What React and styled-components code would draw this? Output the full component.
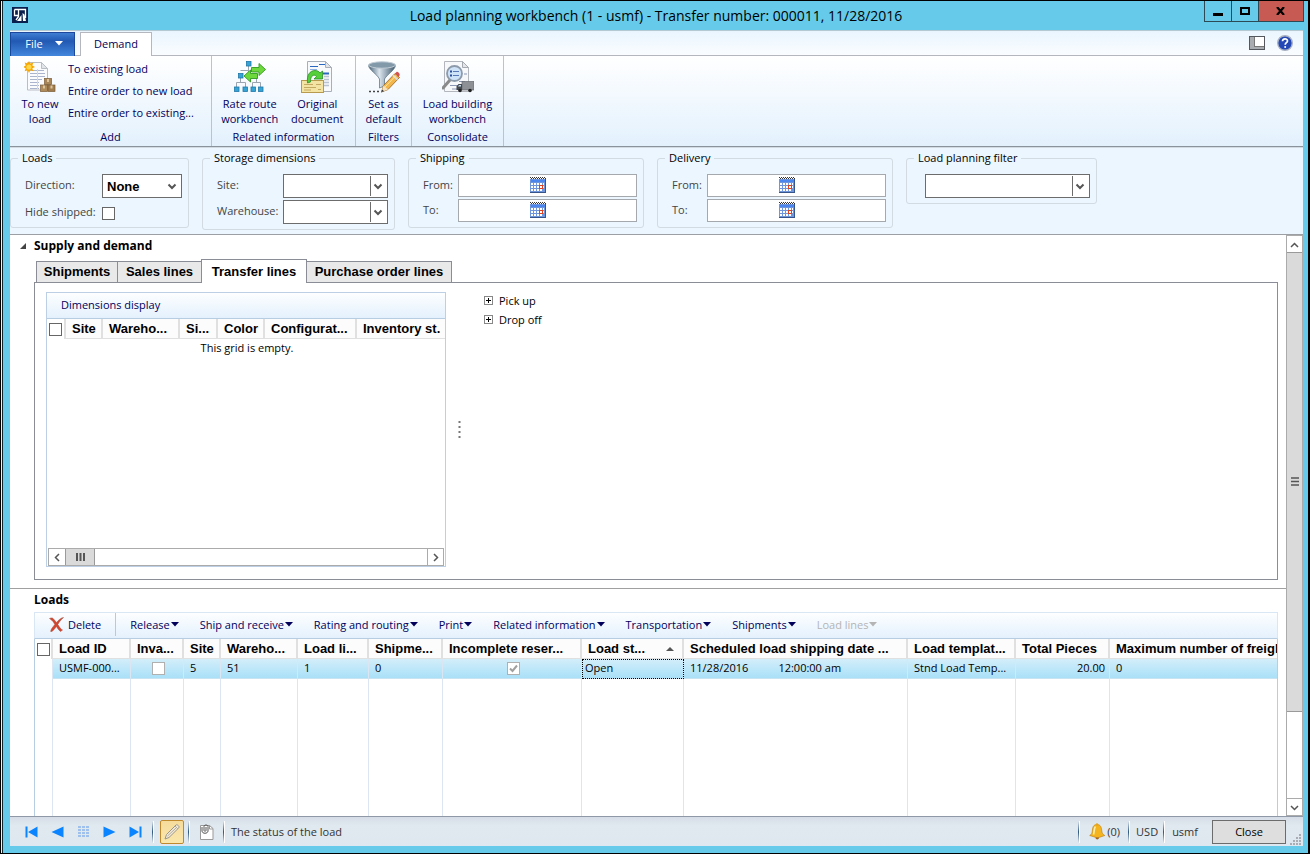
import React from 'react';
import styled, { createGlobalStyle, css } from 'styled-components';

const GlobalStyle = createGlobalStyle`
  * {
    box-sizing: border-box;
  }
  body {
    margin: 0;
    font-family: 'Open Sans', 'Noto Sans', sans-serif;
    font-size: 11px;
    line-height: 16px;
    color: #1e1e1e;
  }
  button, input, select {
    font: inherit;
    color: inherit;
    margin: 0;
    padding: 0;
    border: 0;
    background: none;
    border-radius: 0;
  }
`

/* window frame */

const Window = styled.div`
  display: flex;
  flex-direction: column;
  height: 100vh;
  min-height: 640px;
  border: 1px solid #000;
  border-right: 2px solid #000;
  background: #66cbea;
  box-shadow: inset 1px 0 #e8f4f8, inset 2px 0 #10242c;
`

const TitleBar = styled.header`
  display: grid;
  grid-template-columns: 96px 1fr 100px;
  height: 29px;
  padding: 0 4px 0 11px;
`

const Title = styled.h1`
  margin: 0;
  padding-top: 4px;
  font-size: 14px;
  line-height: 22px;
  font-weight: 400;
  text-align: center;
  color: #000;
`

const AppIcon = styled.svg`
  margin-top: 6px;
`

const WindowButtons = styled.div`
  display: flex;
  height: 21px;
  border: 1px solid #2c4a56;
  border-top: 0;
`

const WindowButton = styled.button`
  display: flex;
  align-items: center;
  justify-content: center;
  flex: ${props => props.$close ? '46 1 0' : '27 1 0'};
  background: ${props => props.$close ? '#c75a52' : 'transparent'};
  border-left: ${props => props.$first ? '0' : '1px solid #2c4a56'};
`

const Content = styled.div`
  flex: 1;
  min-height: 0;
  display: flex;
  flex-direction: column;
  margin: 0 5px 7px 9px;
  background: #fff;
`

/* ribbon */

const TabStrip = styled.nav`
  display: flex;
  align-items: flex-end;
  height: 26px;
  border-top: 1px solid #b5c9d3;
  background: linear-gradient(#e9f5fe, #fbfdff);
  box-shadow: inset 0 -1px #b4b7bd;
`

const FileTab = styled.button`
  display: flex;
  align-items: center;
  justify-content: center;
  gap: 12px;
  width: 65px;
  height: 24px;
  margin-right: 5px;
  padding: 0 0 2px 4px;
  border: 1px solid #1c479c;
  border-bottom: 0;
  background: linear-gradient(#3f7ed2, #2159b3 35%, #4387dc);
  color: #fff;
`

const RibbonTab = styled.button`
  width: 72px;
  height: 24px;
  padding-bottom: 2px;
  border: 1px solid #b4b7bd;
  border-bottom: 0;
  background: #fff;
  color: #00005a;
`

const StripIcons = styled.div`
  display: flex;
  align-items: center;
  gap: 12px;
  height: 25px;
  margin-left: auto;
  padding: 0 10px 2px 0;
`

const Ribbon = styled.div`
  display: flex;
  height: 91px;
  background: linear-gradient(#fff, #e3f1fd);
  border-bottom: 1px solid #8a929c;
`

const RibbonGroup = styled.section`
  display: flex;
  flex-direction: column;
  width: ${props => props.$width}px;
  border-right: 1px solid #bac4d0;
  color: #00005a;
`

const GroupBody = styled.div`
  display: flex;
  flex: 1;
  padding: 5px 4px 0;
  justify-content: ${props => props.$start ? 'flex-start' : 'center'};
`

const GroupLabel = styled.div`
  height: 17px;
  text-align: center;
`

const BigButton = styled.button`
  display: flex;
  flex-direction: column;
  align-items: center;
  gap: 3px;
  width: ${props => props.$width}px;
  line-height: 15px;
  color: #00005a;
  white-space: nowrap;
  svg {
    flex: none;
  }
`

const ButtonStack = styled.div`
  display: flex;
  flex-direction: column;
  padding-left: 2px;
  button {
    height: 22px;
    text-align: left;
    white-space: nowrap;
    padding-bottom: 6px;
  }
`

/* filter pane */

const FilterPane = styled.form`
  display: flex;
  align-items: flex-start;
  gap: 13px;
  height: 88px;
  padding-top: 2px;
  background: #ebf6fe;
  border-top: 1px solid #d3dbe2;
  border-bottom: 1px solid #9c9fa3;
`

const FilterGroup = styled.fieldset`
  display: grid;
  grid-template-columns: ${props => props.$columns};
  row-gap: ${props => props.$gap || 2}px;
  align-items: center;
  width: ${props => props.$width}px;
  min-width: 0;
  margin: 0;
  padding: 8px 6px 5px ${props => props.$indent || 14}px;
  border: 1px solid #d2dae2;
  border-radius: 3px;
  color: #444;
  legend {
    margin-left: ${props => props.$indent ? '-11px' : '-7px'};
    padding: 0 4px;
    color: #000;
  }
  label {
    padding-bottom: 2px;
  }
`

const SelectBox = styled.div`
  display: grid;
  grid-template-columns: 1fr 18px;
  height: 24px;
  border: 1px solid #6c6c6c;
  background: #fff;
  select {
    grid-area: 1 / 1 / 2 / 3;
    min-width: 0;
    appearance: none;
    padding-left: 4px;
    font: bold 13px 'Liberation Sans', Arial, sans-serif;
    color: #000;
  }
  svg {
    grid-area: 1 / 2;
    align-self: center;
    justify-self: stretch;
    pointer-events: none;
  }
`

const DateBox = styled.div`
  display: flex;
  align-items: center;
  height: 23px;
  border: 1px solid #a5a9ae;
  background: #fff;
  input {
    width: 71px;
    height: 21px;
  }
  button {
    display: flex;
    padding-bottom: 2px;
  }
`

const CheckBox = styled.input.attrs({ type: 'checkbox' })`
  appearance: none;
  display: block;
  width: 13px;
  height: 13px;
  border: 1px solid ${props => props.$muted ? '#b0b0b0' : '#666'};
  background: #fff;
  &:checked {
    background: #fff url("data:image/svg+xml,%3Csvg xmlns='http://www.w3.org/2000/svg' viewBox='0 0 11 11'%3E%3Cpath d='M2 5.5L4.5 8L9 2.5' fill='none' stroke='%23a0a0a0' stroke-width='2'/%3E%3C/svg%3E");
  }
`

/* main area */

const Main = styled.main`
  flex: 1;
  min-height: 0;
  display: flex;
`

const Scrolled = styled.div`
  flex: 1;
  min-width: 0;
  display: flex;
  flex-direction: column;
`

const Supply = styled.section`
  padding: 2px 8px 8px 24px;
  border-bottom: 1px solid #a0a0a0;
`

const Heading = styled.h2`
  display: flex;
  align-items: center;
  margin: 0;
  font-size: 12px;
  line-height: 18px;
  color: #000;
  svg {
    flex: none;
    margin-left: -15px;
    margin-right: 7px;
  }
`

const PageTabs = styled.div`
  display: flex;
  align-items: flex-end;
  height: 27px;
  padding-left: 2px;
`

const PageTab = styled.button`
  flex: none;
  width: ${props => props.$width}px;
  height: 21px;
  border: 1px solid #8a8d96;
  border-bottom: 0;
  margin-left: -1px;
  background: #e9e9e9;
  font: bold 13px/20px 'Liberation Sans', Arial, sans-serif;
  color: #000;
  white-space: nowrap;
  &:first-child {
    margin-left: 0;
  }
  ${props => props.$active && css`
    height: 24px;
    line-height: 22px;
    margin-bottom: -1px;
    background: #fff;
  `}
`

const TabPanel = styled.div`
  display: flex;
  height: 298px;
  padding: 9px 11px 12px;
  border: 1px solid #8a8d96;
`

const DimensionGrid = styled.div`
  display: flex;
  flex-direction: column;
  width: 400px;
  border: 1px solid #bccfe4;
`

const Strip = styled.div`
  display: flex;
  align-items: center;
  height: 26px;
  padding-bottom: 2px;
  background: linear-gradient(#fdfeff, #e4f1fd);
  border-bottom: 1px solid #b7cde2;
  color: #00005a;
`

const StripButton = styled.button`
  display: flex;
  align-items: center;
  gap: 1px;
  padding: 0;
  color: ${props => props.disabled ? '#b4b4b4' : '#00005a'};
  white-space: nowrap;
`

const DisplayButton = styled(StripButton)`
  padding-left: 14px;
`

const Grid = styled.table`
  width: 100%;
  table-layout: fixed;
  border-collapse: separate;
  border-spacing: 0;
  th, td {
    padding: 0 4px 0 6px;
    overflow: hidden;
    white-space: nowrap;
    text-align: left;
  }
  th {
    height: 20px;
    border-right: 2px solid #e0e0e0;
    border-bottom: 1px solid #e0e0e0;
    padding-right: 0;
    background: #fcfcfc;
    font: bold 13px/18px 'Liberation Sans', Arial, sans-serif;
    color: #000;
  }
  th:first-child {
    padding-left: 2px;
    background: #fff;
    border-bottom: 0;
  }
  th:last-child {
    border-right: 0;
  }
`

const EmptyCell = styled.td`
  && {
    height: 18px;
    text-align: center;
    color: #000;
  }
`

const HScroll = styled.div`
  display: flex;
  height: 18px;
  margin: auto 1px 0;
  border: 1px solid #ababab;
`

const ScrollButton = styled.button`
  display: flex;
  align-items: center;
  justify-content: center;
  flex: 0 0 16px;
`

const HThumb = styled.div`
  display: flex;
  align-items: center;
  justify-content: center;
  width: 30px;
  border: 1px solid #9a9a9a;
  border-top: 0;
  border-bottom: 0;
  background: #dadada;
  margin-right: auto;
`

const EndScrollButton = styled(ScrollButton)`
  border-left: 1px solid #ababab;
`

const Splitter = styled.div`
  display: flex;
  align-items: center;
  width: 38px;
  padding-left: 12px;
`

const Tree = styled.ul`
  margin: 0;
  padding: 0;
  list-style: none;
  li {
    display: flex;
    align-items: center;
    gap: 6px;
    height: 19px;
    padding-bottom: 2px;
    color: #000;
  }
  button {
    display: flex;
  }
`

const LoadsPane = styled.section`
  flex: 1;
  min-height: 0;
  display: flex;
  flex-direction: column;
  padding: 2px 8px 0 24px;
`

const LoadsStrip = styled(Strip)`
  flex: none;
  gap: 20px;
  height: 27px;
  margin-top: 3px;
  border: 1px solid #d9e6f3;
  border-bottom-color: #b7cde2;
`

const DeleteButton = styled(StripButton)`
  align-self: stretch;
  gap: 4px;
  margin-right: -6px;
  padding-left: 14px;
  padding-right: 14px;
  border-right: 1px solid #bfc8d2;
`

const LoadsGrid = styled.div`
  flex: 1;
  min-height: 0;
  display: grid;
  border-left: 1px solid #b7cde2;
  border-right: 1px solid #b7cde2;
  overflow: hidden;
  td {
    border-right: 1px solid #dbe6f2;
    color: #000;
  }
  td:last-child {
    border-right: 0;
  }
`

const SelectedRow = styled.tr`
  td {
    height: 20px;
    padding-bottom: 1px;
    border-bottom: 1px solid #c8e4f2;
    background: linear-gradient(#d3eefa, #a9e0f8);
  }
  td:first-child {
    background: #fff;
    border-bottom: 0;
  }
`

const CenterCell = styled.td`
  input {
    margin: 0 auto;
  }
`

const FocusCell = styled.td`
  && {
    padding-left: 3px;
    outline: 1px dotted #000;
    outline-offset: -1px;
  }
`

const NumberCell = styled.td`
  && {
    text-align: right;
  }
`

const SortHead = styled.div`
  display: flex;
  align-items: center;
  justify-content: space-between;
  padding-right: 8px;
`

const DateTime = styled.div`
  display: flex;
  gap: 30px;
`

const VScroll = styled.div`
  display: flex;
  flex-direction: column;
  width: 17px;
  border: 1px solid #ababab;
  background: #fff;
`

const VThumb = styled.div`
  flex: 461 1 0;
  display: flex;
  align-items: center;
  justify-content: center;
  border-top: 1px solid #9a9a9a;
  border-bottom: 1px solid #9a9a9a;
  background: #dadada;
`

const VTrack = styled.div`
  flex: 87 1 0;
  border-bottom: 1px solid #ababab;
`

/* status bar */

const StatusBar = styled.footer`
  display: flex;
  align-items: center;
  height: 30px;
  padding-left: 14px;
  border-top: 1px solid #8e98a6;
  background: linear-gradient(#d5dce6, #e1e9f0 30%, #dee7ef);
  color: #333;
`

const RecordButtons = styled.div`
  display: flex;
  gap: 11px;
  margin-right: 9px;
  button {
    display: flex;
  }
`

const Divider = styled.span`
  width: 2px;
  height: 22px;
  margin: 0 6px 0 0;
  background: linear-gradient(90deg, transparent 50%, #fff 50%), linear-gradient(#dfe7ef, #2d587e 50%, #dfe7ef);
`

const EditButton = styled.button`
  display: flex;
  align-items: center;
  justify-content: center;
  width: 24px;
  height: 24px;
  margin-right: 4px;
  border: 1px solid #c08a2c;
  border-radius: 2px;
  background: linear-gradient(#f5dc9c, #fbe7ab);
`

const ClipButton = styled.button`
  display: flex;
  margin: 0 9px 0 4px;
`

const Alerts = styled.button`
  display: flex;
  align-items: center;
  gap: 1px;
  margin: 0 8px 0 3px;
`

const StatusText = styled.span`
  margin-right: ${props => props.$grow ? 'auto' : '5px'};
`

const Company = styled.span`
  margin: 0 14px 0 1px;
`

const CloseButton = styled.button`
  width: 74px;
  height: 24px;
  margin-right: 4px;
  border: 1px solid #6c6c6c;
  background: #dedede;
  color: #000;
`

const Grip = styled.svg`
  margin-right: 1px;
  align-self: flex-end;
`

/* icons */

const Caret = ({ color = '#00005a' }) => (
  <svg width="9" height="5" viewBox="0 0 9 5"><path d="M0 0h8L4 4.500z" fill={color} /></svg>
)

const Chevron = ({ split }) => (
  <svg width="18" height="20" viewBox="0 0 18 20">
    {split && <path d="M1.5 0v20" stroke="#6c6c6c" />}
    <path d="M5.5 8.5L9 12L12.5 8.5" fill="none" stroke="#555" strokeWidth="2" />
  </svg>
)

const arrows = {
  up: 'M1 7L4.5 3.5L8 7',
  down: 'M1 3L4.5 6.5L8 3',
  left: 'M6 1L2.5 4.5L6 8',
  right: 'M3 1L6.5 4.5L3 8',
}

const Arrow = ({ to }) => (
  <svg width="9" height="9" viewBox="0 0 9 9">
    <path d={arrows[to]} fill="none" stroke="#555" strokeWidth="1.5" />
  </svg>
)

const CalendarIcon = () => (
  <svg width="16" height="16" viewBox="0 0 16 16" shapeRendering="crispEdges">
    <path d="M0 .5h16" stroke="#333" strokeDasharray="1 1" />
    <path d="M1 1.500h15" stroke="#333" strokeDasharray="1 1" />
    <rect x="0" y="2" width="16" height="14" fill="#35558c" />
    <rect x="0" y="2" width="15" height="13" fill="#6f96dc" />
    <rect x="1" y="3" width="14" height="2" fill="#4b86ee" />
    <path d="M1 6h2v2h-2zM4 6h2v2h-2zM7 6h2v2h-2zM10 6h2v2h-2zM13 6h1v2h-1zM1 9h2v2h-2zM4 9h2v2h-2zM7 9h2v2h-2zM13 9h1v2h-1zM1 12h2v2h-2zM4 12h2v2h-2zM7 12h2v2h-2zM10 12h2v2h-2z" fill="#fff" />
    <rect x="9.5" y="8.5" width="3" height="3" fill="#fff" stroke="#e0411c" />
  </svg>
)

const Page = () => (
  <>
    <path d="M3.500 1.500h14l6 6v21.500h-20z" fill="#fafbfc" stroke="#b9bdc4" />
    <path d="M17.500 1.500v6h6z" fill="#e1e4e8" stroke="#b9bdc4" />
  </>
)

const NewLoadIcon = () => (
  <svg width="32" height="32" viewBox="0 0 32 32">
    <Page />
    <path d="M6 9.500h14M6 12.500h15M6 15.500h15M6 18.500h12M6 21.500h9M6 24.500h9M6 27.500h9" stroke="#aab4cd" />
    <path d="M13.500 8v20" stroke="#d3d8e3" />
    <path d="M5 0l1.300 2.600 3-1-1 3 2.700 1.400-2.700 1.300 1 3-3-1L5 12 3.700 9.300l-3 1 1-3L-1 6l2.700-1.400-1-3 3 1z" fill="#f7a600" />
    <circle cx="5" cy="6" r="2.600" fill="#ffd84a" />
    <g stroke="#7a5c37" strokeWidth=".7">
      <rect x="20.500" y="17.500" width="7" height="6" fill="#a98658" />
      <rect x="16.500" y="24" width="7" height="6.500" fill="#b08b5a" />
      <rect x="24" y="24" width="7" height="6.500" fill="#a17c4c" />
    </g>
    <path d="M23 18h2v3h-2zM19 24.500h2v3h-2zM26.500 24.500h2v3h-2z" fill="#dcc49c" />
  </svg>
)

const RouteIcon = () => (
  <svg width="32" height="32" viewBox="0 0 32 32">
    <path d="M14.500 3v10M6.500 14.500v7M6.500 9.500h8M2.500 28v-6.500h9V28M18.500 28v-6.500h8V28M22.500 17v4.500" fill="none" stroke="#9aa5b0" />
    <g fill="#35a4d5" stroke="#2177a8" strokeWidth=".8">
      <rect x="12.500" y=".5" width="4.500" height="4.500" />
      <rect x="4.500" y="12.500" width="4.500" height="4.500" />
      <rect x=".5" y="26" width="4.500" height="4.500" />
      <rect x="9" y="26" width="4.500" height="4.500" />
      <rect x="17" y="26" width="4.500" height="4.500" />
      <rect x="24.500" y="26" width="4.500" height="4.500" />
    </g>
    <g fill="#6cd83c" stroke="#2f9b1d" strokeWidth=".9" strokeLinejoin="round">
      <path d="M17.500 6.500h7.500V2.500l6.500 6-6.500 6V11h-7.500z" />
      <path d="M23.500 12.500h-7V9l-6.500 6 6.500 6v-3.500h7z" />
    </g>
  </svg>
)

const DocumentIcon = () => (
  <svg width="32" height="32" viewBox="0 0 32 32">
    <path d="M6.500.5h18l6 6v24h-24z" fill="#f7f9fb" stroke="#a9afb8" />
    <path d="M24.500.5v6h6z" fill="#dfe3e8" stroke="#a9afb8" />
    <path d="M9 5.500h8M18 3.500h6" stroke="#2a67c0" />
    <path d="M9 8.500h7" stroke="#8fb0e0" />
    <path d="M22 12.500h6" stroke="#2a67c0" strokeWidth="2" />
    <path d="M23 15.500h5M23 18.500h5M23 21.500h5M23 24.500h5" stroke="#b8c2d0" strokeWidth="1.500" />
    <rect x=".5" y="19.500" width="22" height="12" fill="#f4e4a4" stroke="#b79a4e" />
    <path d="M3 23.500h9M3 26.500h12M3 29h7M15 23.500h5M17 28.500h3" stroke="#c2aa62" />
    <path d="M6.500 22C5.500 14 9 9.500 14 9.500c2.500 0 4 1 5 2.500l2.500-2v8h-8.500l2.500-2.500C13 12.500 9 15 9.500 21z" fill="#55cf3a" stroke="#27912a" strokeWidth=".8" />
  </svg>
)

const FilterIcon = () => (
  <svg width="32" height="32" viewBox="0 0 32 32">
    <defs>
      <linearGradient id="metal">
        <stop offset="0" stopColor="#476176" />
        <stop offset=".4" stopColor="#dbe5ed" />
        <stop offset="1" stopColor="#3e586c" />
      </linearGradient>
    </defs>
    <path d="M0.500 4.500c1 5 8 8 11 13.500v9l5-2v-7c3-5 10-8.500 11-13.500z" fill="url(#metal)" stroke="#536b7e" strokeWidth=".7" />
    <ellipse cx="14" cy="4" rx="13.500" ry="3.200" fill="#8299aa" stroke="#c0ccd5" />
    <path d="M1 30.500h13" stroke="#444" strokeWidth="1.500" strokeDasharray="2 2" />
    <path d="M13.500 31l2-6.500L27 12.500l4.500 4L20 28.500z" fill="#f3b64a" stroke="#936021" strokeWidth=".8" />
    <path d="M27 12.500l1.500-1.500c1-1 4 2 3 3.500l-1 1.500z" fill="#d35252" />
    <path d="M25 14.500l4.500 4" stroke="#d9dde0" strokeWidth="1.800" />
    <path d="M13.500 31l2-6.500 4.500 4z" fill="#f5e2c0" />
    <path d="M13.500 31l.8-2.500 1.700 1.700z" fill="#333" />
    <path d="M17 26L28 14.500" stroke="#fde6a0" />
  </svg>
)

const LoadBuildingIcon = () => (
  <svg width="32" height="32" viewBox="0 0 32 32">
    <path d="M2.500.5h18l6 6v24h-24z" fill="#f7f8fa" stroke="#b3b7bd" />
    <path d="M20.500.5v6h6z" fill="#e3e5e9" stroke="#a5a9b0" />
    <path d="M17 20.500h6M8 24.500h8M10 28h5M22 13h3" stroke="#8b96b4" />
    <path d="M8 19l-7 8" stroke="#8a8a8a" strokeWidth="3" strokeLinecap="round" />
    <circle cx="12.500" cy="12.500" r="7.500" fill="#cfe3f8" stroke="#8c9aaa" strokeWidth="1.800" />
    <path d="M8 10.500h2M8 14.500h2" stroke="#2b4d9c" strokeWidth="2" />
    <path d="M11 10.500h6M11 14.500h6" stroke="#5977b4" />
    <rect x="20" y="20.500" width="12" height="8.500" fill="#8d9095" stroke="#666a70" strokeWidth=".7" />
    <path d="M14.500 29v-3.500l2-2.500h3.500v6z" fill="#43494f" />
    <path d="M16 25.500l1-1.500h2v1.500z" fill="#c3d9e8" />
    <circle cx="18" cy="29.500" r="1.800" fill="#222" />
    <circle cx="28" cy="29.500" r="1.800" fill="#222" />
  </svg>
)

const DeleteIcon = () => (
  <svg width="15" height="15" viewBox="0 0 15 15">
    <path d="M.5 1.500C2.500.5 4 .8 5 2.500l2.500 3C9.500 3 12 .8 14.500.5 12 3 10 5 8.800 7.500c2 3 3 4.800 4.700 5.500l-2 1.500C9.500 13 8.500 11 7.300 9.500 5.500 12 4.500 14 1.800 14.800 1.300 13 3.500 10.500 5.800 7.500 4.500 5 3.500 3.500.5 1.500z" fill="#d8432c" stroke="#9c4e3c" strokeWidth=".5" />
  </svg>
)

const PlusIcon = () => (
  <svg width="9" height="9" viewBox="0 0 9 9" shapeRendering="crispEdges">
    <rect x=".5" y=".5" width="8" height="8" fill="#fff" stroke="#888" />
    <path d="M2 4.500h5M4.500 2v5" stroke="#000" />
  </svg>
)

const recordIcons = [
  ['First record', <path key="a" d="M1 1.500h2v11H1zM13 1.500v11L3.500 7z" fill="#0a84ff" />],
  ['Previous record', <path key="a" d="M13 1.500v11L1 7z" fill="#0a84ff" />],
  ['Grid view', <path key="a" d="M1.500 1h3v2h-3zM5.500 1h3v2h-3zM9.500 1h3v2h-3zM1.500 4h3v2h-3zM5.500 4h3v2h-3zM9.500 4h3v2h-3zM1.500 7h3v2h-3zM5.500 7h3v2h-3zM9.500 7h3v2h-3zM1.500 10h3v2h-3zM5.500 10h3v2h-3zM9.500 10h3v2h-3z" fill="#9fc0ec" />],
  ['Next record', <path key="a" d="M1 1.500v11L13 7z" fill="#0a84ff" />],
  ['Last record', <path key="a" d="M1 1.500v11L10.500 7zM11 1.500h2v11h-2z" fill="#0a84ff" />],
]

/* data */

const pageTabs = [
  ['Shipments', 82],
  ['Sales lines', 85],
  ['Transfer lines', 106],
  ['Purchase order lines', 146],
]

const dimensionColumns = [
  ['Site', 37],
  ['Wareho...', 77],
  ['Si...', 38],
  ['Color', 47],
  ['Configurat...', 92],
  ['Inventory st.'],
]

const loadColumns = [
  ['Load ID', 78],
  ['Inva...', 53],
  ['Site', 37],
  ['Wareho...', 77],
  ['Load li...', 71],
  ['Shipme...', 74],
  ['Incomplete reser...', 139],
  ['Load st...', 102, true],
  ['Scheduled load shipping date ...', 224],
  ['Load templat...', 108],
  ['Total Pieces', 94],
  ['Maximum number of freight pieces'],
]

const loadMenus = ['Release', 'Ship and receive', 'Rating and routing', 'Print', 'Related information', 'Transportation', 'Shipments']

const DateGroup = ({ name }) => (
  <FilterGroup $width={236} $columns="35px 1fr">
    <legend>{name}</legend>
    {['From', 'To'].map(end => (
      <React.Fragment key={end}>
        <label htmlFor={name + end}>{end}:</label>
        <DateBox>
          <input id={name + end} type="text" />
          <button type="button" aria-label={`Pick ${end} date`}><CalendarIcon /></button>
        </DateBox>
      </React.Fragment>
    ))}
  </FilterGroup>
)

const Filters = () => (
  <FilterPane>
    <FilterGroup $width={179} $columns="77px 1fr" $gap={6}>
      <legend>Loads</legend>
      <label htmlFor="direction">Direction:</label>
      <SelectBox>
        <select id="direction"><option>None</option></select>
        <Chevron />
      </SelectBox>
      <label htmlFor="hide">Hide shipped:</label>
      <div><CheckBox id="hide" /></div>
    </FilterGroup>
    <FilterGroup $width={193} $columns="66px 1fr">
      <legend>Storage dimensions</legend>
      <label htmlFor="site">Site:</label>
      <SelectBox><select id="site"><option></option></select><Chevron split /></SelectBox>
      <label htmlFor="warehouse">Warehouse:</label>
      <SelectBox><select id="warehouse"><option></option></select><Chevron split /></SelectBox>
    </FilterGroup>
    <DateGroup name="Shipping" />
    <DateGroup name="Delivery" />
    <FilterGroup $width={191} $columns="1fr" $indent={18}>
      <legend>Load planning filter</legend>
      <SelectBox>
        <select aria-label="Load planning filter"><option></option></select>
        <Chevron split />
      </SelectBox>
    </FilterGroup>
  </FilterPane>
)

const SupplyAndDemand = () => (
  <Supply>
    <Heading>
      <svg width="8" height="8" viewBox="0 0 8 8"><path d="M7 1v6H1z" fill="#444" /></svg>
      Supply and demand
    </Heading>
    <PageTabs>
      {pageTabs.map(([name, width]) => (
        <PageTab key={name} $width={width} $active={name === 'Transfer lines'}>{name}</PageTab>
      ))}
    </PageTabs>
    <TabPanel>
      <DimensionGrid>
        <Strip><DisplayButton>Dimensions display</DisplayButton></Strip>
        <Grid>
          <colgroup>
            <col width="19" />
            {dimensionColumns.map(([name, width]) => <col key={name} width={width} />)}
          </colgroup>
          <thead>
            <tr>
              <th><CheckBox aria-label="Select all dimensions" /></th>
              {dimensionColumns.map(([name]) => <th key={name}>{name}</th>)}
            </tr>
          </thead>
          <tbody>
            <tr><EmptyCell colSpan={7}>This grid is empty.</EmptyCell></tr>
          </tbody>
        </Grid>
        <HScroll>
          <ScrollButton aria-label="Scroll left"><Arrow to="left" /></ScrollButton>
          <HThumb>
            <svg width="9" height="8" viewBox="0 0 9 8"><path d="M1 0v8M4.500 0v8M8 0v8" stroke="#555" strokeWidth="2" /></svg>
          </HThumb>
          <EndScrollButton aria-label="Scroll right"><Arrow to="right" /></EndScrollButton>
        </HScroll>
      </DimensionGrid>
      <Splitter>
        <svg width="3" height="18" viewBox="0 0 3 18"><path d="M1.500 0v18" stroke="#777" strokeWidth="2" strokeDasharray="2 3" /></svg>
      </Splitter>
      <Tree>
        <li><button aria-label="Expand pick up"><PlusIcon /></button>Pick up</li>
        <li><button aria-label="Expand drop off"><PlusIcon /></button>Drop off</li>
      </Tree>
    </TabPanel>
  </Supply>
)

const Loads = () => (
  <LoadsPane>
    <Heading>Loads</Heading>
    <LoadsStrip>
      <DeleteButton><DeleteIcon />Delete</DeleteButton>
      {loadMenus.map(name => <StripButton key={name}>{name}<Caret /></StripButton>)}
      <StripButton disabled>Load lines<Caret color="#b4b4b4" /></StripButton>
    </LoadsStrip>
    <LoadsGrid>
      <Grid>
        <colgroup>
          <col width="18" />
          {loadColumns.map(([name, width]) => <col key={name} width={width} />)}
        </colgroup>
        <thead>
          <tr>
            <th><CheckBox aria-label="Select all loads" /></th>
            {loadColumns.map(([name, , sorted]) => (
              <th key={name}>
                {sorted
                  ? <SortHead>{name}<svg width="8" height="4" viewBox="0 0 8 4"><path d="M0 4L4 0l4 4z" fill="#555" /></svg></SortHead>
                  : name}
              </th>
            ))}
          </tr>
        </thead>
        <tbody>
          <SelectedRow>
            <td />
            <td>USMF-000...</td>
            <CenterCell><CheckBox $muted aria-label="Invalid" /></CenterCell>
            <td>5</td>
            <td>51</td>
            <td>1</td>
            <td>0</td>
            <CenterCell><CheckBox $muted defaultChecked aria-label="Incomplete reservation" /></CenterCell>
            <FocusCell>Open</FocusCell>
            <td><DateTime><span>11/28/2016</span><span>12:00:00 am</span></DateTime></td>
            <td>Stnd Load Temp...</td>
            <NumberCell>20.00</NumberCell>
            <td>0</td>
          </SelectedRow>
          <tr>
            <td />
            {loadColumns.map(([name]) => <td key={name} />)}
          </tr>
        </tbody>
      </Grid>
    </LoadsGrid>
  </LoadsPane>
)

const App = () => (
  <Window>
    <GlobalStyle />
    <TitleBar>
      <AppIcon width="16" height="16" viewBox="0 0 16 16">
        <rect width="16" height="16" fill="#0a1f4e" />
        <path d="M2.500 2.500h11v8.500M2.500 2.500v6h4v-6M6.500 6v3.500L4 13" fill="none" stroke="#fff" strokeWidth="1.300" />
        <path d="M5 14l4.500-6v6zM10.500 6l2 1.500L14 14h-3z" fill="#fff" />
      </AppIcon>
      <Title>Load planning workbench (1 - usmf) - Transfer number: 000011, 11/28/2016</Title>
      <WindowButtons>
        <WindowButton $first aria-label="Minimize">
          <svg width="10" height="10" viewBox="0 0 10 10"><path d="M0 8.500h10" stroke="#000" strokeWidth="3" /></svg>
        </WindowButton>
        <WindowButton aria-label="Maximize">
          <svg width="10" height="8" viewBox="0 0 10 8"><rect x="1" y="1" width="8" height="6" fill="none" stroke="#000" strokeWidth="2" /></svg>
        </WindowButton>
        <WindowButton $close aria-label="Close window">
          <svg width="9" height="8" viewBox="0 0 9 8"><path d="M1 0l7 8M8 0L1 8" stroke="#000" strokeWidth="2.200" /></svg>
        </WindowButton>
      </WindowButtons>
    </TitleBar>
    <Content>
      <TabStrip>
        <FileTab>File <Caret color="#fff" /></FileTab>
        <RibbonTab>Demand</RibbonTab>
        <StripIcons>
          <svg width="16" height="14" viewBox="0 0 16 14">
            <rect x=".5" y=".5" width="15" height="13" fill="#fff" stroke="#54585e" />
            <path d="M1 1h4v9h10v3H1z" fill="#a9adb2" />
            <path d="M5.500 1v9M5 10.500h10" stroke="#777" />
          </svg>
          <svg width="16" height="16" viewBox="0 0 16 16">
            <circle cx="8" cy="8" r="7.300" fill="#2347b5" stroke="#a9b1c2" strokeWidth="1.400" />
            <path d="M5.500 6.300C5.500 3 10.500 3 10.500 6c0 1.700-2.300 1.700-2.300 3.700" fill="none" stroke="#fff" strokeWidth="1.700" />
            <circle cx="8.200" cy="12" r="1" fill="#fff" />
          </svg>
        </StripIcons>
      </TabStrip>
      <Ribbon>
        <RibbonGroup $width={202}>
          <GroupBody $start>
            <BigButton $width={52}><NewLoadIcon /><span>To new<br />load</span></BigButton>
            <ButtonStack>
              <button>To existing load</button>
              <button>Entire order to new load</button>
              <button>Entire order to existing...</button>
            </ButtonStack>
          </GroupBody>
          <GroupLabel>Add</GroupLabel>
        </RibbonGroup>
        <RibbonGroup $width={144}>
          <GroupBody>
            <BigButton $width={68}><RouteIcon /><span>Rate route<br />workbench</span></BigButton>
            <BigButton $width={68}><DocumentIcon /><span>Original<br />document</span></BigButton>
          </GroupBody>
          <GroupLabel>Related information</GroupLabel>
        </RibbonGroup>
        <RibbonGroup $width={56}>
          <GroupBody>
            <BigButton $width={48}><FilterIcon /><span>Set as<br />default</span></BigButton>
          </GroupBody>
          <GroupLabel>Filters</GroupLabel>
        </RibbonGroup>
        <RibbonGroup $width={92}>
          <GroupBody>
            <BigButton $width={84}><LoadBuildingIcon /><span>Load building<br />workbench</span></BigButton>
          </GroupBody>
          <GroupLabel>Consolidate</GroupLabel>
        </RibbonGroup>
      </Ribbon>
      <Filters />
      <Main>
        <Scrolled>
          <SupplyAndDemand />
          <Loads />
        </Scrolled>
        <VScroll>
          <ScrollButton aria-label="Scroll up"><Arrow to="up" /></ScrollButton>
          <VThumb>
            <svg width="8" height="9" viewBox="0 0 8 9"><path d="M0 1h8M0 4.500h8M0 8h8" stroke="#555" strokeWidth="1.500" /></svg>
          </VThumb>
          <VTrack />
          <ScrollButton aria-label="Scroll down"><Arrow to="down" /></ScrollButton>
        </VScroll>
      </Main>
      <StatusBar>
        <RecordButtons>
          {recordIcons.map(([name, shape]) => (
            <button key={name} aria-label={name}><svg width="15" height="14" viewBox="0 0 14 14">{shape}</svg></button>
          ))}
        </RecordButtons>
        <Divider />
        <EditButton aria-label="Edit record">
          <svg width="18" height="18" viewBox="0 0 18 18">
            <path d="M2 16l1.500-4.500L13 2c1-1 4 1.500 2.800 2.800L6 14.500z" fill="#f3ead6" stroke="#9a958c" />
            <path d="M12 3l3 3M4.500 13L13 5" stroke="#b0aaa0" />
          </svg>
        </EditButton>
        <Divider />
        <ClipButton aria-label="Attachments">
          <svg width="14" height="16" viewBox="0 0 14 16">
            <path d="M.5 1.500h9l3.500 3v11H.5z" fill="#fff" stroke="#999" />
            <path d="M9.500 1.500v3.500H13" fill="none" stroke="#999" />
            <path d="M2 3v4c0 3 6 3 6 0V2.500C8 .5 4 .5 4 2.500v4c0 1 2 1 2 0V3" fill="none" stroke="#555" />
          </svg>
        </ClipButton>
        <Divider />
        <StatusText $grow>The status of the load</StatusText>
        <Divider />
        <Alerts>
          <svg width="17" height="17" viewBox="0 0 17 17">
            <path d="M8 1.500c4 0 4.500 3.500 4.800 6.500.2 2 1.200 3.500 3 4.500L8.500 15 .7 12.500c2-1 2.300-2.500 2.600-4.500C3.500 5 4 1.500 8 1.500z" fill="#f5b41e" stroke="#b57a12" strokeWidth=".6" />
            <path d="M6.500 3.500C5 5 5.500 8 4.500 11.500" fill="none" stroke="#fff0a5" strokeWidth="1.600" />
            <circle cx="8" cy="1.500" r="1.200" fill="#e8a317" />
            <path d="M6.500 14.500h3.500c0 2.500-3.500 2.500-3.500 0z" fill="#a86411" />
          </svg>
          (0)
        </Alerts>
        <Divider />
        <StatusText>USD</StatusText>
        <Divider />
        <Company>usmf</Company>
        <CloseButton>Close</CloseButton>
        <Grip width="12" height="12" viewBox="0 0 12 12">
          <path d="M9 0h2v2H9zM6 3h2v2H6zM9 3h2v2H9zM3 6h2v2H3zM6 6h2v2H6zM9 6h2v2H9zM0 9h2v2H0zM3 9h2v2H3zM6 9h2v2H6zM9 9h2v2H9z" fill="#a9adb3" />
        </Grip>
      </StatusBar>
    </Content>
  </Window>
)

export default App;
